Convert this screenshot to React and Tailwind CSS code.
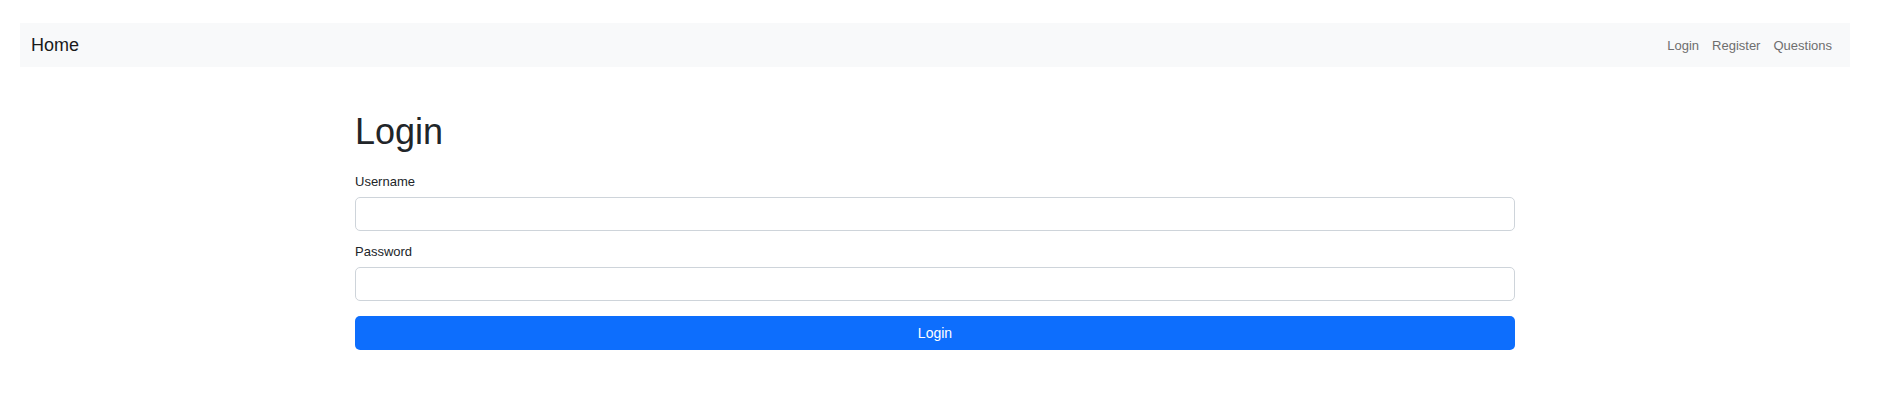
export default function App() {
  return (
    <div className="min-h-[401px] bg-white pt-[23px] text-[#212529]" style={{ fontFamily: '"Liberation Sans", Arial, sans-serif' }}>
      <nav className="ml-[20px] flex h-[44px] w-[1830px] items-center justify-between bg-[#f8f9fa] pl-[11px] pr-[18px]">
        <a className="text-[18px] leading-none text-[#1a1a1a]">Home</a>
        <div className="flex items-center gap-[13px] text-[13px] leading-none text-[#6e6e6e]">
          <a>Login</a>
          <a>Register</a>
          <a>Questions</a>
        </div>
      </nav>
      <div className="ml-[355px] w-[1160px] pt-[43px]">
        <h1 className="text-[36px] leading-[1.2] font-normal">Login</h1>
        <div className="mt-[19px]">
          <label className="block h-[20px] text-[13px] leading-[20px]">Username</label>
          <input type="text" className="mt-[5px] block h-[34px] w-full rounded-[5px] border border-[#ced4da] bg-white" />
        </div>
        <div className="mt-[11px]">
          <label className="block h-[20px] text-[13px] leading-[20px]">Password</label>
          <input type="password" className="mt-[5px] block h-[34px] w-full rounded-[5px] border border-[#ced4da] bg-white" />
        </div>
        <button className="mt-[15px] flex h-[34px] w-full items-center justify-center rounded-[5px] bg-[#0d6efd] text-[14px] text-white">
          Login
        </button>
      </div>
    </div>
  );
}
